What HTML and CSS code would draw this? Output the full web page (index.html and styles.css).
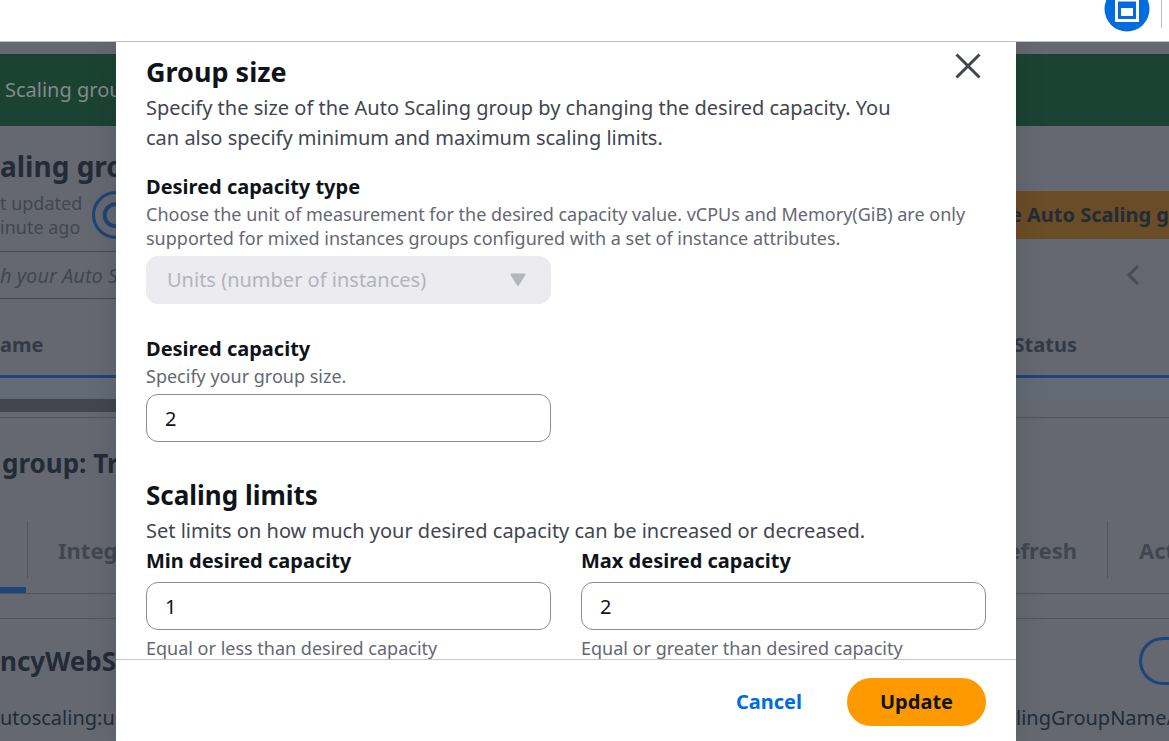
FILE: index.html
```html
<!DOCTYPE html>
<html lang="en">
<head>
<meta charset="utf-8">
<meta name="viewport" content="width=device-width, initial-scale=1">
<title>Group size</title>
<link rel="stylesheet" href="styles.css">
</head>
<body>
<header class="topbar">
  <button class="topbar-button" aria-label="Open panel">
    <svg width="46" height="46" viewBox="0 0 46 46" aria-hidden="true"><circle cx="23" cy="23" r="22.5" fill="#006ce0"/><path d="M12.5 14h21v20.500h-21z" fill="none" stroke="#fff" stroke-width="3"/><path d="M17 22h12v8H17z" fill="#fff"/></svg>
  </button>
  <span class="topbar-divider"></span>
</header>
<main class="stage">
  <div class="page">
    <div class="banner"><span>Scaling grou</span></div>
    <div class="row title-row">
      <div class="cell">
        <h1>aling gro</h1>
        <div class="updated">
          <p>t updated<br>inute ago</p>
          <button class="refresh" aria-label="Refresh"><svg width="48" height="48" viewBox="0 0 48 48" fill="none" stroke="#1f4478" stroke-width="3" aria-hidden="true"><circle cx="24" cy="24" r="22.5"/><path d="M32 17a11 11 0 1 0 2 11" stroke-width="4"/></svg></button>
        </div>
      </div>
      <button class="create"><span>e Auto Scaling g</span></button>
    </div>
    <div class="row search-row">
      <input class="search" aria-label="Search" placeholder="h your Auto S">
      <button class="prev" aria-label="Previous page"><svg width="14" height="20" viewBox="0 0 14 20" fill="none" stroke="#494c56" stroke-width="3" aria-hidden="true"><path d="M12 1 3 10l9 9"/></svg></button>
    </div>
    <div class="row columns-row"><b>ame</b><b>Status</b></div>
    <div class="selected-row"></div>
    <div class="scroll-row"><div class="thumb"></div></div>
    <div class="row group-row"><h2>group: Tr</h2></div>
    <div class="row tabs-row">
      <div class="tabs-left"><button class="tab-active" aria-label="Details"></button><button class="tab">Integ</button></div>
      <div class="tabs-right"><button class="tab tab-end">efresh</button><button class="tab">Act</button></div>
    </div>
    <div class="tab-gap"></div>
    <div class="row detail-row"><h2>ncyWebS</h2><button class="edit" aria-label="Edit"></button></div>
    <div class="row arn-row"><span>utoscaling:us</span><span>lingGroupName/</span></div>
  </div>

  <div class="overlay">
    <form class="dialog" role="dialog" aria-labelledby="dialog-title">
      <div class="dialog-body">
        <div class="dialog-head">
          <h2 class="heading" id="dialog-title">Group size</h2>
          <button type="button" class="close" aria-label="Close"><svg width="26" height="26" viewBox="0 0 26 26" fill="none" stroke="#424650" stroke-width="3" aria-hidden="true"><path d="M1.5 1.5l23 23M24.5 1.5l-23 23"/></svg></button>
        </div>
        <p class="text intro">Specify the size of the Auto Scaling group by changing the desired capacity. You can also specify minimum and maximum scaling limits.</p>

        <div class="field">
          <label for="type">Desired capacity type</label>
          <p class="hint">Choose the unit of measurement for the desired capacity value. vCPUs and Memory(GiB) are only supported for mixed instances groups configured with a set of instance attributes.</p>
          <div class="half select-wrap">
            <select id="type" disabled><option>Units (number of instances)</option></select>
            <svg class="caret" width="16" height="14" viewBox="0 0 16 14" aria-hidden="true"><path d="M1.5 1.5h13L8 12z" fill="#b4b4bb" stroke="#b4b4bb" stroke-width="2" stroke-linejoin="round"/></svg>
          </div>
        </div>

        <div class="field">
          <label for="desired">Desired capacity</label>
          <p class="hint">Specify your group size.</p>
          <div class="half"><input id="desired" type="text" inputmode="numeric" value="2"></div>
        </div>

        <h2 class="heading limits">Scaling limits</h2>
        <p class="text">Set limits on how much your desired capacity can be increased or decreased.</p>
        <div class="pair">
          <div>
            <label for="min">Min desired capacity</label>
            <input id="min" type="text" inputmode="numeric" value="1">
            <p class="hint">Equal or less than desired capacity</p>
          </div>
          <div>
            <label for="max">Max desired capacity</label>
            <input id="max" type="text" inputmode="numeric" value="2">
            <p class="hint">Equal or greater than desired capacity</p>
          </div>
        </div>
      </div>
      <div class="dialog-foot">
        <button type="button" class="cancel">Cancel</button>
        <button type="submit" class="update">Update</button>
      </div>
    </form>
  </div>
</main>
</body>
</html>
```
FILE: styles.css
```css
* { box-sizing: border-box; }
body {
  margin: 0;
  height: 100vh;
  display: flex;
  flex-direction: column;
  overflow: hidden;
  font-family: "Noto Sans", "Open Sans", sans-serif;
  font-size: 20px;
  line-height: 30px;
  color: #0f141a;
  background: #fff;
}
h1, h2, p { margin: 0; }
button { margin: 0; padding: 0; border: 0; background: none; font: inherit; color: inherit; }
input, select { font: inherit; color: inherit; }
svg { display: block; }

.topbar {
  height: 42px;
  flex: none;
  display: flex;
  justify-content: flex-end;
  align-items: flex-end;
  gap: 11px;
  padding: 0 7px 9px 0;
  border-bottom: 1px solid #c0c0c6;
  overflow: hidden;
}
.topbar-divider { width: 1px; height: 28px; background: #c0c0c6; margin-bottom: 4px; }

.stage { flex: 1; position: relative; min-height: 0; overflow: hidden; background: #656871; }
.page { padding-top: 12px; color: #232b37; white-space: nowrap; }
.row { display: flex; justify-content: space-between; }

.banner { height: 72px; display: flex; align-items: center; padding-left: 5px; background: #1b4332; color: #84898d; }

.title-row { height: 125px; padding-top: 24px; align-items: flex-start; }
.title-row h1 { font-size: 28px; line-height: 32px; }
.updated { display: flex; gap: 12px; padding-top: 9px; color: #424650; font-size: 18px; line-height: 24px; }
.updated p { width: 80px; text-align: right; }
.create { width: 153px; height: 48px; margin-top: 41px; overflow: hidden; background: #6a4d26; color: #232b37; font-weight: 700; display: flex; justify-content: flex-end; align-items: center; }

.search-row { height: 48px; align-items: center; padding-right: 29px; }
.search { width: 400px; height: 48px; border: 1px solid #454950; border-left: 0; padding: 0; background: none; font-style: italic; }
.search::placeholder { color: #424650; opacity: 1; }

.columns-row { height: 79px; padding: 16px 92px 0 0; align-items: center; border-bottom: 3px solid #1f4478; color: #333a46; }
.selected-row { height: 21px; background: #626b74; }
.scroll-row { height: 19px; border-bottom: 1px solid #50545c; }
.thumb { width: 600px; height: 13px; background: #43464d; }

.group-row { height: 90px; align-items: center; padding-left: 2px; }
.group-row h2, .detail-row h2 { font-size: 26px; line-height: 32px; }

.tabs-row { height: 86px; align-items: flex-end; border-bottom: 1px solid #50545c; color: #424650; }
.tabs-left, .tabs-right { display: flex; height: 86px; }
.tabs-left { gap: 30px; }
.tabs-right { width: 153px; overflow: hidden; }
.tab { height: 58px; margin-top: 14px; font-size: 22px; font-weight: 700; }
.tab-active { width: 28px; background: linear-gradient(#50545c, #50545c) right 14px / 1px 58px no-repeat, linear-gradient(#1f4478, #1f4478) 0 100% / 26px 6px no-repeat; }
.tab-end { width: 92px; flex: none; display: flex; align-items: center; justify-content: flex-end; padding-right: 30px; margin-right: 31px; border-right: 1px solid #50545c; overflow: hidden; }
.tab-gap { height: 25px; border-bottom: 1px solid #50545c; }

.detail-row { height: 84px; align-items: center; }
.edit { width: 30px; height: 48px; border: 3px solid #1f4478; border-right: 0; border-radius: 24px 0 0 24px; }
.arn-row span:last-child { width: 153px; overflow: hidden; }

.overlay { position: absolute; inset: 0; display: flex; padding: 0 153px 0 116px; }
.dialog {
  flex: 1;
  display: flex;
  flex-direction: column;
  margin: 0;
  background: #fff;
  box-shadow: 0 0 30px rgba(0, 7, 22, 0.12);
}
.dialog-body { flex: 1; min-height: 0; overflow: hidden; padding: 11px 30px 0; }
.dialog-head { display: flex; justify-content: space-between; }
.heading { font-size: 26px; line-height: 36px; padding-bottom: 3px; }
.dialog-head .heading { font-size: 27px; padding: 1px 0 3px; }
.close { width: 26px; height: 26px; margin-right: 5px; }
.text { color: #424650; }
.intro { padding-right: 60px; margin-bottom: 19px; }
.field { margin-bottom: 30px; }
label { display: block; font-weight: 700; line-height: 30px; }
.hint { color: #656871; font-size: 18px; line-height: 24px; }
.half { width: calc(50% - 15px); margin-top: 6px; }
.select-wrap { display: grid; }
.select-wrap > * { grid-area: 1 / 1; }
.caret { justify-self: end; align-self: center; margin-right: 25px; }
.dialog select, .dialog input {
  display: block;
  width: 100%;
  height: 48px;
  padding: 0 18px;
  border: 1px solid #8c8c94;
  border-radius: 12px;
  background: #fff;
}
.dialog select { appearance: none; border-color: #ebebf0; background: #ebebf0; color: #b4b4bb; opacity: 1; padding: 0 20px; }
.limits { margin-top: 35px; }
.pair { display: grid; grid-template-columns: 1fr 1fr; gap: 30px; }
.pair input { margin: 6px 0; }

.dialog-foot {
  height: 82px;
  flex: none;
  display: flex;
  justify-content: flex-end;
  align-items: center;
  gap: 45px;
  padding: 2px 30px 0;
  border-top: 1px solid #c6c6cd;
  font-weight: 700;
}
.cancel { color: #006ce0; }
.update { width: 139px; height: 48px; border-radius: 24px; background: #ff9900; }
```
